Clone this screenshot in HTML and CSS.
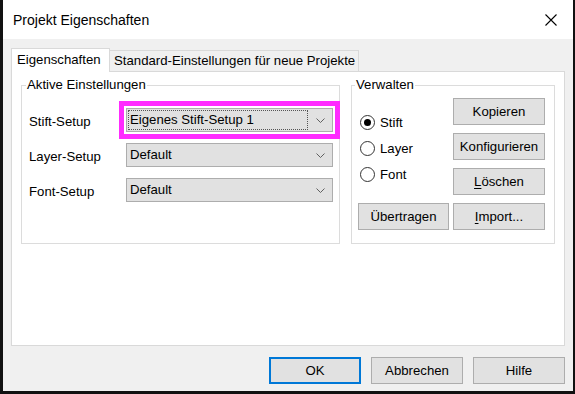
FILE: index.html
```html
<!DOCTYPE html>
<html lang="de">
<head>
  <meta charset="UTF-8" />
  <title>Projekt Eigenschaften</title>
  <link rel="stylesheet" href="styles.css">
</head>
<body>

  <div class="window">

    <!-- Title bar -->
    <div class="titlebar">
      <span class="title">Projekt Eigenschaften</span>
      <svg class="close" width="12" height="12" viewBox="0 0 12 12">
        <path d="M0.5 0.5 L11.5 11.5 M11.5 0.5 L0.5 11.5" stroke="#000" stroke-width="1.1" fill="none"/>
      </svg>
    </div>

    <div class="client">

      <!-- Tabs -->
      <div class="tabs">
        <div class="tab active">Eigenschaften</div>
        <div class="tab">Standard-Einstellungen für neue Projekte</div>
      </div>

      <div class="panel">

        <fieldset class="group settings">
          <legend>Aktive Einstellungen</legend>

          <div class="field">
            <span class="field-label">Stift-Setup</span>
            <div class="combo focused">
              <span class="combo-value">Eigenes Stift-Setup 1</span>
              <span class="combo-arrow">
                <svg width="9" height="5" viewBox="0 0 9 5"><path d="M0.5 0.5 L4.5 4.5 L8.5 0.5" fill="none" stroke="#606060"/></svg>
              </span>
            </div>
          </div>

          <div class="field">
            <span class="field-label">Layer-Setup</span>
            <div class="combo">
              <span class="combo-value">Default</span>
              <span class="combo-arrow">
                <svg width="9" height="5" viewBox="0 0 9 5"><path d="M0.5 0.5 L4.5 4.5 L8.5 0.5" fill="none" stroke="#606060"/></svg>
              </span>
            </div>
          </div>

          <div class="field">
            <span class="field-label">Font-Setup</span>
            <div class="combo">
              <span class="combo-value">Default</span>
              <span class="combo-arrow">
                <svg width="9" height="5" viewBox="0 0 9 5"><path d="M0.5 0.5 L4.5 4.5 L8.5 0.5" fill="none" stroke="#606060"/></svg>
              </span>
            </div>
          </div>
        </fieldset>

        <fieldset class="group manage">
          <legend>Verwalten</legend>

          <div class="manage-grid">
            <div class="radios">
              <div class="radio checked"><span class="radio-dot"></span>Stift</div>
              <div class="radio"><span class="radio-dot"></span>Layer</div>
              <div class="radio"><span class="radio-dot"></span>Font</div>
            </div>

            <div class="side-buttons">
              <button class="btn">Kopieren</button>
              <button class="btn">Konfigurieren</button>
              <button class="btn"><u>L</u>öschen</button>
            </div>

            <button class="btn">Übertragen</button>
            <button class="btn"><u>I</u>mport...</button>
          </div>
        </fieldset>

      </div>

      <!-- Dialog buttons -->
      <div class="footer">
        <button class="btn default">OK</button>
        <button class="btn">Abbrechen</button>
        <button class="btn">Hilfe</button>
      </div>

    </div>
  </div>

</body>
</html>
```

FILE: styles.css
```css
body {
  margin: 0;
  padding: 0;
  background: #111;
  font-family: 'Liberation Sans', Arial, sans-serif;
  font-size: 13.2px;
  color: #000;
}

.window {
  width: 575px;
  height: 394px;
  box-sizing: border-box;
  border-left: 3px solid #111;
  border-right: 2px solid #111;
  border-bottom: 3px solid #111;
  background: #f0f0f0;
  display: flex;
  flex-direction: column;
}

.titlebar {
  height: 39px;
  background: #fff;
  display: flex;
  align-items: center;
  justify-content: space-between;
  padding: 0 16px 0 10px;
}

.title {
  font-size: 14px;
  margin-top: 1px;
}

.close {
  display: block;
  margin-top: 1px;
}

.client {
  flex: 1;
  padding: 9px 8px 7px 8px;
  display: flex;
  flex-direction: column;
}

/* Tabs */
.tabs {
  height: 23px;
  display: flex;
  align-items: flex-end;
}

.tab {
  height: 21px;
  box-sizing: border-box;
  border: 1px solid #d9d9d9;
  border-bottom: none;
  padding: 0 3px 0 4px;
  line-height: 20px;
  background: #f0f0f0;
  margin-left: -1px;
}

.tab.active {
  height: 24px;
  margin-left: 0;
  margin-bottom: -1px;
  padding: 0 5px 0 5px;
  line-height: 22px;
  background: #fff;
  position: relative;
  z-index: 1;
  width: 99px;
}

.panel {
  height: 275px;
  box-sizing: border-box;
  background: #fff;
  border: 1px solid #d9d9d9;
  padding: 5px 9px 0 9px;
  display: flex;
  gap: 11px;
}

/* Group boxes */
.group {
  margin: 0;
  border: 1px solid #dcdcdc;
  height: 167px;
  box-sizing: border-box;
}

.group legend {
  line-height: 16px;
  padding: 0 1px;
  margin-left: -3px;
}

.settings {
  width: 320px;
  padding: 15px 6px 0 7px;
}

.manage {
  width: 204px;
  padding: 5px 9px 0 6px;
}

.field {
  display: flex;
  align-items: center;
  margin-bottom: 11px;
}

.field-label {
  width: 97px;
  margin-top: 2px;
}

.combo {
  flex: 1;
  height: 24px;
  box-sizing: border-box;
  border: 1px solid #adadad;
  background: #e1e1e1;
  display: flex;
  align-items: stretch;
}

.combo-value {
  flex: 1;
  margin: 1px 0 1px 1px;
  padding-left: 1px;
  border: 1px dotted transparent;
  line-height: 18px;
}

.focused {
  outline: 5px solid #ff2bff;
  outline-offset: 2px;
}

.focused .combo-value {
  border-color: #555;
}

.combo-arrow {
  width: 24px;
  display: flex;
  align-items: center;
  justify-content: center;
}

/* Verwalten */
.manage-grid {
  display: grid;
  grid-template-columns: 91px 92px;
  column-gap: 4px;
  row-gap: 8px;
}

.radios {
  padding-top: 11px;
}

.radio {
  height: 26px;
  display: flex;
  align-items: center;
  margin-left: 2px;
}

.radio-dot {
  width: 15px;
  height: 15px;
  box-sizing: border-box;
  border: 1px solid #333;
  border-radius: 50%;
  background: #fff;
  margin-right: 5px;
  display: flex;
  align-items: center;
  justify-content: center;
}

.radio.checked .radio-dot::after {
  content: "";
  width: 7px;
  height: 7px;
  border-radius: 50%;
  background: #000;
}

.side-buttons {
  display: flex;
  flex-direction: column;
  gap: 8px;
}

.btn {
  height: 27px;
  box-sizing: border-box;
  border: 1px solid #adadad;
  background: #e1e1e1;
  font-family: 'Liberation Sans', Arial, sans-serif;
  font-size: 13.2px;
  color: #000;
  padding: 0;
}

.btn u {
  text-decoration-thickness: 1px;
  text-underline-offset: 2px;
}

.footer {
  margin-top: 11px;
  display: flex;
  justify-content: flex-end;
  gap: 10px;
}

.footer .btn {
  width: 92px;
}

.btn.default {
  border: 2px solid #0078d7;
}
```
